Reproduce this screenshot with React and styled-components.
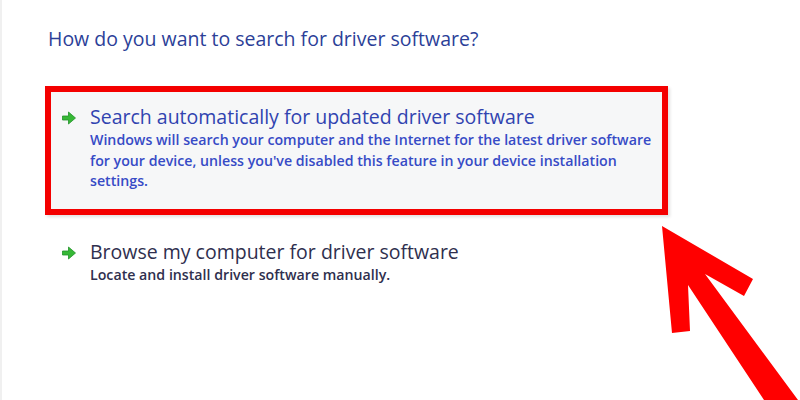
import React from 'react';
import styled, { createGlobalStyle } from 'styled-components';

const GlobalStyle = createGlobalStyle`
  html, body {
    margin: 0;
    padding: 0;
    background: #ffffff;
  }
  body {
    font-family: "Open Sans", "Noto Sans", "Liberation Sans", sans-serif;
  }
`;

const Page = styled.div`
  position: relative;
  width: 800px;
  height: 400px;
  overflow: hidden;
  box-sizing: border-box;
  border-left: 2px solid #f0f0f0;
  padding: 25px 0 0 46px;
`;

const Heading = styled.h1`
  margin: 0 0 34px 0;
  font-size: 19.5px;
  line-height: 27px;
  font-weight: 400;
  color: #2c3f98;
`;

const OptionBox = styled.div`
  display: flex;
  align-items: flex-start;
  gap: 13px;
  box-sizing: border-box;
  width: 623px;
  margin-left: -3px;
  padding: ${({ highlighted }) => (highlighted ? '12px 8px 17px 10px' : '24px 8px 0 16px')};
  border: ${({ highlighted }) => (highlighted ? '6px solid #f40000' : 'none')};
  background: ${({ highlighted }) => (highlighted ? '#f6f7f8' : 'transparent')};
  box-shadow: ${({ highlighted }) => (highlighted ? '2px 2px 3px rgba(0,0,0,0.12)' : 'none')};
`;

const GoArrow = styled.svg`
  flex: none;
  width: 16px;
  height: 14px;
  margin-top: 7px;
`;

const OptionText = styled.div`
  display: flex;
  flex-direction: column;
  width: 572px;
`;

const OptionTitle = styled.div`
  font-size: 19.5px;
  line-height: 26px;
  color: ${({ dark }) => (dark ? '#2f2f4e' : '#3043b0')};
`;

const OptionDesc = styled.div`
  font-size: 14.2px;
  font-weight: 600;
  line-height: 20.5px;
  color: ${({ dark }) => (dark ? '#2f2f4e' : '#374bc6')};
`;

const Pointer = styled.svg`
  position: absolute;
  left: 0;
  top: 0;
  width: 800px;
  height: 400px;
  pointer-events: none;
`;

const GreenArrow = () => (
  <GoArrow viewBox="0 0 16 14">
    <path
      d="M1.5 5 H7.5 V1 L14.5 7 L7.5 13 V9 H1.5 Z"
      fill="#36b836"
      stroke="#22922a"
      strokeWidth="0.8"
      strokeLinejoin="round"
    />
  </GoArrow>
);

const Option = ({ title, desc, highlighted, dark }) => (
  <OptionBox highlighted={highlighted}>
    <GreenArrow />
    <OptionText>
      <OptionTitle dark={dark}>{title}</OptionTitle>
      <OptionDesc dark={dark}>{desc}</OptionDesc>
    </OptionText>
  </OptionBox>
);

const App = () => (
  <>
    <GlobalStyle />
    <Page>
      <Heading>How do you want to search for driver software?</Heading>
      <Option
        highlighted
        title="Search automatically for updated driver software"
        desc="Windows will search your computer and the Internet for the latest driver software for your device, unless you've disabled this feature in your device installation settings."
      />
      <Option
        dark
        title="Browse my computer for driver software"
        desc="Locate and install driver software manually."
      />
      <Pointer viewBox="0 0 800 400">
        <polygon
          points="660,226 751,279 742,296 703,274 796,400 762,400 686,285 688,331 670,333"
          fill="#ff0000"
        />
      </Pointer>
    </Page>
  </>
);

export default App;
